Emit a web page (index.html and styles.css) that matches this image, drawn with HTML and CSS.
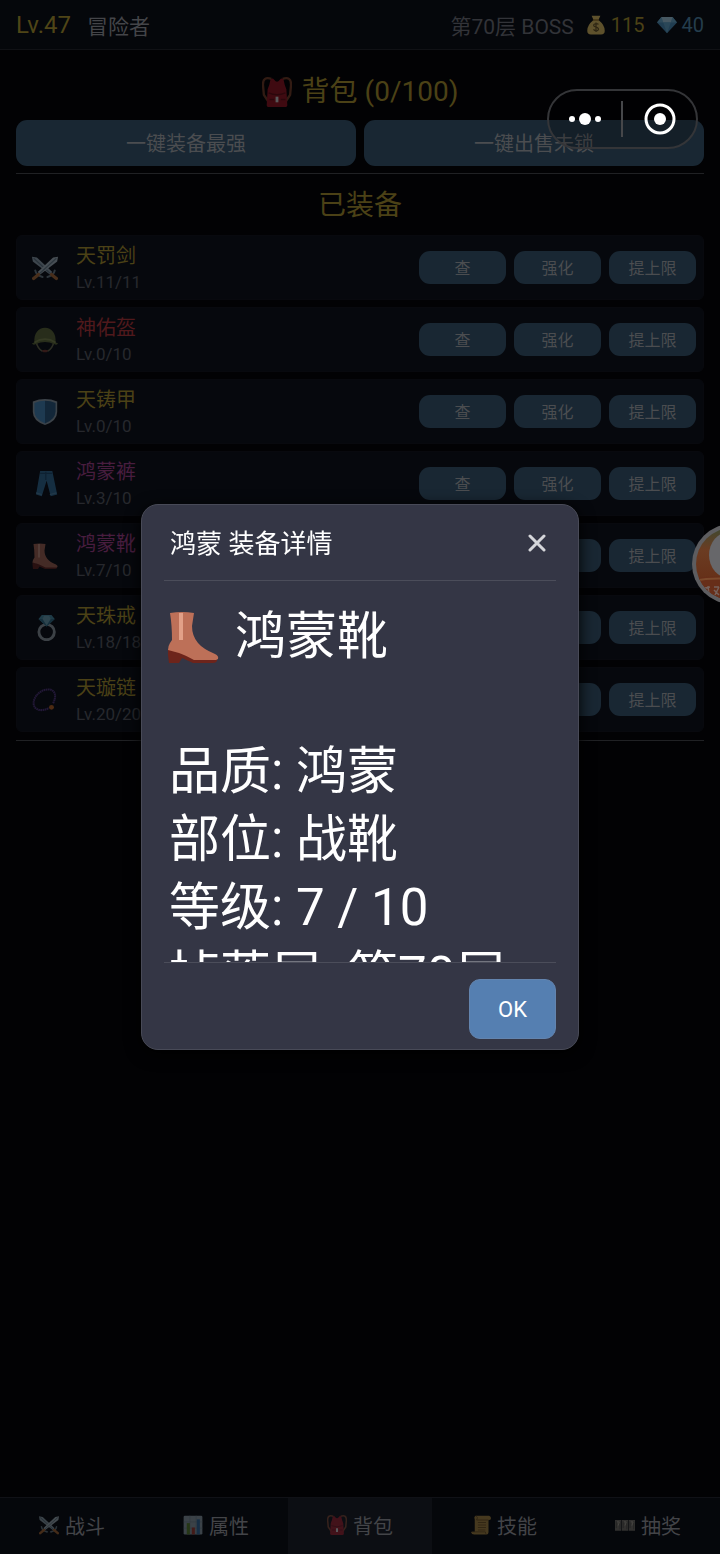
FILE: index.html
```html
<!DOCTYPE html>
<html lang="zh-CN">
<head>
<meta charset="utf-8">
<meta name="viewport" content="width=device-width, initial-scale=1">
<title>背包</title>
<link rel="stylesheet" href="styles.css">
</head>
<body>
<svg class="sprite" aria-hidden="true">
  <symbol id="swords" viewBox="0 0 32 32">
    <path d="M0 2l6 1 19 18-3 3L1 8z" fill="#a9bdc8"/><path d="M2 4l21 19" stroke="#6d8593" stroke-width="1.5"/>
    <path d="M32 2l-6 1L7 21l3 3L31 8z" fill="#c4d4dc"/><path d="M30 4L9 23" stroke="#78909c" stroke-width="1.5"/>
    <path d="M4 19q1 6 9 8M28 19q-1 6-9 8" fill="none" stroke="#788b94" stroke-width="2.5" stroke-linecap="round"/>
    <path d="M8 24l-6 5M24 24l6 5" stroke="#c87936" stroke-width="4" stroke-linecap="round"/>
  </symbol>
  <symbol id="helmet" viewBox="0 0 32 32">
    <path d="M5 18q2 9 8 12M27 18q-2 9-8 12" fill="none" stroke="#77764f" stroke-width="2"/>
    <path d="M12 29q4-2 8 0l-2 2h-4z" fill="#8a3b2c"/>
    <path d="M3 19C2 8 8 1 16 1s14 7 13 18l3 1q-1 3-5 1-11-5-22 0-4 2-5-1z" fill="#697636"/>
    <path d="M3 19q13-8 26 0" fill="none" stroke="#919c50" stroke-width="2"/>
  </symbol>
  <symbol id="shield" viewBox="0 0 32 32">
    <path d="M1 3q15-6 30 0v13q0 11-15 16Q1 27 1 16z" fill="#a4b4bd"/>
    <path d="M3 5q6-3 13-3v28Q3 25 3 15z" fill="#4d9bd3"/><path d="M16 2q7 0 13 3v10q0 10-13 15z" fill="#2c658f"/>
  </symbol>
  <symbol id="jeans" viewBox="0 0 32 32">
    <path d="M10 0h15l6 29-8 2-5-19-6 19-7-2z" fill="#3478a5"/><path d="M10 3h15M17 1v10" stroke="#1f5279" stroke-width="1.5"/>
    <path d="M5 27l7 2M22 29l8-2" stroke="#5895ba" stroke-width="1.5"/>
  </symbol>
  <symbol id="boot" viewBox="0 0 52 52">
    <path d="M1 38l14 4 34 5q2 1 1 3-1 2-4 2H26l-11-5-3 5H2l-1-8z" fill="#6d241b"/>
    <path d="M3 2q12-2 24 0l-2 13q0 10 6 17 5 6 17 11 4 2 3 5l-2 1H27Q18 44 12 42L1 39q0-4 2-7l2-3Q5 14 3 2z" fill="#bd7058"/>
    <path d="M12 2h4v27h-4z" fill="#e2a088"/>
  </symbol>
  <symbol id="ring" viewBox="0 0 32 32">
    <circle cx="18" cy="21" r="9.500" fill="none" stroke="#a5b0b5" stroke-width="3.500"/>
    <path d="M12 0h12l4 5-10 9L8 5z" fill="#4e9eb6"/><path d="M8 5h20L18 14z" fill="#347b96"/><path d="M15 1l-2 4 5 8 5-8-2-4" fill="#7dbbcd"/>
  </symbol>
  <symbol id="beads" viewBox="0 0 32 32">
    <path d="M26 20C31 10 28 3 20 3 10 3 2 12 2 20s9 11 19 6" fill="none" stroke="#5a3789" stroke-width="2.500" stroke-dasharray="2 .6"/>
    <circle cx="24" cy="25" r="3" fill="#d8701c"/>
  </symbol>
  <symbol id="pack" viewBox="0 0 32 32">
    <path d="M10 2Q1-1 1 8l1 11 6 9M22 2q9-3 9 6l-1 11-6 9" fill="none" stroke="#8e4c30" stroke-width="2.500"/>
    <path d="M9 3q2-3 4 0 3 4 6 0 2-3 4 0 1 6 3 10l1 17q0 2-3 2H8q-3 0-3-2l1-17q2-4 3-10z" fill="#b51c2b"/>
    <path d="M7 17q9 4 18 0M8 24h5M20 24h5" fill="none" stroke="#7c111c" stroke-width="1.500"/>
    <path d="M14.500 21h3v6h-3z" fill="#fff"/>
  </symbol>
  <symbol id="money" viewBox="0 0 32 32">
    <path d="M9 1h14l-3 7q10 8 10 17 0 6-6 6H8q-6 0-6-6 0-9 10-17z" fill="#d8b85b"/><path d="M11 8h10" stroke="#8a651c" stroke-width="2"/>
    <path d="M20 15q-2-2-5-1-4 1-2 4l5 2q4 3 0 5-4 1-6-2M16 12v15" fill="none" stroke="#66501f" stroke-width="2"/>
  </symbol>
  <symbol id="gem" viewBox="0 0 32 32">
    <path d="M7 3h18l7 9-16 17L0 12z" fill="#4588b1"/><path d="M7 3l3 9H0zM25 3l-3 9h10z" fill="#68a6c7"/>
    <path d="M7 3h18l-3 9H10z" fill="#a2c8db"/><path d="M10 12h12l-6 17z" fill="#5f9fc2"/>
  </symbol>
  <symbol id="chart" viewBox="0 0 32 32">
    <rect x="1" y="1" width="30" height="30" rx="2" fill="#aebfc9"/><path d="M1 11h30M1 21h30M11 1v30M21 1v30" stroke="#899ca7"/>
    <path d="M6 13h5v18H6z" fill="#6b9c32"/><path d="M14 20h5v11h-5z" fill="#c64336"/><path d="M22 7h5v24h-5z" fill="#3d82c0"/>
  </symbol>
  <symbol id="scroll" viewBox="0 0 32 32">
    <path d="M8 1h21q3 1 3 4t-4 3v19q0 4-4 4H5q-4 0-5-4h6V7Q4 2 8 1z" fill="#d0a34b"/>
    <path d="M8 1q4 3 1 7h19M1 27h22q0 3 2 4" fill="none" stroke="#8a6328" stroke-width="1.500"/><path d="M11 12h13M11 16h13M11 20h13M11 24h12" stroke="#8a6328" stroke-width="1.500"/>
  </symbol>
  <symbol id="cards" viewBox="0 0 32 32">
    <path d="M0 8h10v17H0zM11 8h10v17H11zM22 8h10v17H22z" fill="#8d887d"/>
    <path d="M2 10v11M8 10v13M13 10v11M19 10v13M24 10v11M30 10v13" stroke="#5f5a51" stroke-width="1.500"/>
    <path d="M3 11h4l-2 6M14 11h4l-2 6M25 11h4l-2 6" fill="none" stroke="#d0c8b4" stroke-width="1.500"/>
  </symbol>
</svg>

<div class="app">
  <header class="topbar">
    <span class="level">Lv.47</span>
    <span class="player">冒险者</span>
    <span class="stage">第70层 BOSS</span>
    <span class="coin gold"><svg class="icon"><use href="#money"/></svg>115</span>
    <span class="coin blue"><svg class="icon"><use href="#gem"/></svg>40</span>
  </header>

  <main class="content">
    <h1 class="title"><svg class="icon"><use href="#pack"/></svg>背包 (0/100)</h1>
    <div class="bulk">
      <button class="btn bulk-btn" type="button">一键装备最强</button>
      <button class="btn bulk-btn" type="button">一键出售未锁</button>
    </div>
    <hr class="rule">
    <h2 class="subtitle">已装备</h2>
    <ul class="gear">
      <li class="row"><svg class="icon"><use href="#swords"/></svg><div class="info"><span class="name gold">天罚剑</span><span class="lv">Lv.11/11</span></div><div class="actions"><button class="btn" type="button">查</button><button class="btn" type="button">强化</button><button class="btn" type="button">提上限</button></div></li>
      <li class="row"><svg class="icon"><use href="#helmet"/></svg><div class="info"><span class="name red">神佑盔</span><span class="lv">Lv.0/10</span></div><div class="actions"><button class="btn" type="button">查</button><button class="btn" type="button">强化</button><button class="btn" type="button">提上限</button></div></li>
      <li class="row"><svg class="icon"><use href="#shield"/></svg><div class="info"><span class="name gold">天铸甲</span><span class="lv">Lv.0/10</span></div><div class="actions"><button class="btn" type="button">查</button><button class="btn" type="button">强化</button><button class="btn" type="button">提上限</button></div></li>
      <li class="row"><svg class="icon"><use href="#jeans"/></svg><div class="info"><span class="name purple">鸿蒙裤</span><span class="lv">Lv.3/10</span></div><div class="actions"><button class="btn" type="button">查</button><button class="btn" type="button">强化</button><button class="btn" type="button">提上限</button></div></li>
      <li class="row"><svg class="icon"><use href="#boot"/></svg><div class="info"><span class="name purple">鸿蒙靴</span><span class="lv">Lv.7/10</span></div><div class="actions"><button class="btn" type="button">查</button><button class="btn" type="button">强化</button><button class="btn" type="button">提上限</button></div></li>
      <li class="row"><svg class="icon"><use href="#ring"/></svg><div class="info"><span class="name gold">天珠戒</span><span class="lv">Lv.18/18</span></div><div class="actions"><button class="btn" type="button">查</button><button class="btn" type="button">强化</button><button class="btn" type="button">提上限</button></div></li>
      <li class="row"><svg class="icon"><use href="#beads"/></svg><div class="info"><span class="name gold">天璇链</span><span class="lv">Lv.20/20</span></div><div class="actions"><button class="btn" type="button">查</button><button class="btn" type="button">强化</button><button class="btn" type="button">提上限</button></div></li>
    </ul>
    <hr class="rule">
  </main>

  <nav class="tabs">
    <button class="tab" type="button"><svg class="icon"><use href="#swords"/></svg>战斗</button>
    <button class="tab" type="button"><svg class="icon"><use href="#chart"/></svg>属性</button>
    <button class="tab active" type="button" aria-current="page"><svg class="icon"><use href="#pack"/></svg>背包</button>
    <button class="tab" type="button"><svg class="icon"><use href="#scroll"/></svg>技能</button>
    <button class="tab" type="button"><svg class="icon"><use href="#cards"/></svg>抽奖</button>
  </nav>
</div>

<button class="bubble" type="button" aria-label="悬浮球">
  <svg viewBox="0 0 80 80" aria-hidden="true">
    <defs>
      <linearGradient id="orb" x1="0" y1="0" x2="0" y2="1"><stop offset="0" stop-color="#3f4930"/><stop offset=".3" stop-color="#6b3c22"/><stop offset="1" stop-color="#632812"/></linearGradient>
      <clipPath id="orb-clip"><circle cx="40" cy="40" r="36"/></clipPath>
    </defs>
    <circle cx="40" cy="40" r="40" fill="#5d5d60"/><circle cx="40" cy="40" r="36" fill="url(#orb)"/>
    <g clip-path="url(#orb-clip)"><path d="M0 56q20-8 80 2v22H0z" fill="#672e19"/><path d="M3 57q20-6 77 2" fill="none" stroke="#7b4a2c" stroke-width="2"/>
    <ellipse cx="37" cy="31" rx="20" ry="23" fill="#67676a"/>
    <path d="M13 64l5-1M14 68l4 3M16 62l1 8M22 63h5M22 66l5 5M27 63l-4 8" stroke="#75605a" stroke-width="1.500"/></g>
  </svg>
</button>

<div class="overlay">
  <section class="modal" role="dialog" aria-modal="true" aria-labelledby="dialog-title">
    <header class="modal-head">
      <h2 class="modal-title" id="dialog-title">鸿蒙 装备详情</h2>
      <button class="close" type="button" aria-label="关闭"><svg viewBox="0 0 18 18"><path d="M2 2l14 14M16 2L2 16"/></svg></button>
    </header>
    <div class="modal-body">
      <p class="item"><svg class="item-icon"><use href="#boot"/></svg>鸿蒙靴</p>
      <p>品质: 鸿蒙</p>
      <p>部位: 战靴</p>
      <p>等级: 7 / 10</p>
      <p>掉落层: 第70层</p>
    </div>
    <footer class="modal-foot"><button class="ok" type="button">OK</button></footer>
  </section>
</div>

<div class="capsule">
  <button class="cap-btn" type="button" aria-label="更多"><svg width="32" height="12" viewBox="0 0 32 12"><circle cx="3" cy="6" r="3"/><circle cx="16" cy="6" r="6"/><circle cx="29" cy="6" r="3"/></svg></button>
  <button class="cap-btn" type="button" aria-label="关闭小程序"><svg width="32" height="32" viewBox="0 0 32 32"><circle class="target" cx="16" cy="16" r="14"/><circle cx="16" cy="16" r="6"/></svg></button>
</div>
</body>
</html>
```
FILE: styles.css
```css
* { box-sizing: border-box; }

body {
  margin: 0;
  background: #020204;
  color: #48494c;
  font-family: Roboto, "Noto Sans CJK SC", sans-serif;
  font-size: 20px;
}

h1, h2, p, ul { margin: 0; padding: 0; font-weight: 400; }
button { border: 0; padding: 0; color: inherit; font: inherit; background: none; cursor: pointer; }

.sprite { position: absolute; width: 0; height: 0; }
.icon { width: 20px; height: 20px; flex: none; opacity: .34; }
.gold { color: #4b4116; }
.blue { color: #243d4d; }
.red { color: #50191c; }
.purple { color: #481d3f; }

.app { display: flex; flex-direction: column; min-height: 100vh; }

.topbar {
  display: flex;
  align-items: center;
  height: 50px;
  padding: 0 16px;
  border-bottom: 1px solid #101115;
  background: #05070b;
  font-size: 21px;
}
.level { color: #4f4517; font-size: 24px; }
.player { margin-left: 16px; color: #444549; }
.stage { margin-left: auto; color: #323338; }
.coin { display: flex; align-items: center; gap: 5px; margin-left: 12px; font-size: 20px; }
.coin .icon { opacity: .42; }

.content { flex: 1; padding: 22px 16px; }
.title, .subtitle { line-height: 40px; font-size: 28px; text-align: center; color: #4b4116; }
.title { display: flex; align-items: center; justify-content: center; gap: 10px; margin-bottom: 8px; }
.title .icon { width: 30px; height: 30px; }
.subtitle { margin: 12px 0 9px; }
.bulk { display: flex; gap: 8px; margin-bottom: 7px; }
.btn {
  height: 33px;
  padding-bottom: 2px;
  border-radius: 11px;
  background: #192733;
  color: #4b4d50;
  font-size: 16px;
}
.bulk-btn { flex: 1; height: 46px; font-size: 20px; }
.rule { height: 1px; margin: 0; border: 0; background: #202124; }

.gear { display: grid; gap: 7px; margin-bottom: 8px; list-style: none; }
.row {
  display: flex;
  align-items: center;
  height: 65px;
  padding: 0 7px 0 15px;
  border: 1px solid #08090e;
  border-radius: 6px;
  background: #06080d;
}
.row .icon { width: 26px; height: 26px; }
.info { display: grid; padding-top: 2px; margin-left: 18px; line-height: 26px; }
.lv { font-size: 17px; color: #27282d; }
.actions { display: grid; grid-template-columns: repeat(3, 87px); gap: 8px; margin-left: auto; }

.tabs { display: grid; grid-template-columns: repeat(5, 1fr); height: 57px; border-top: 1px solid #101116; background: #05070b; }
.tab { display: flex; align-items: center; justify-content: center; gap: 6px; padding-bottom: 2px; color: #434448; }
.tab .icon { opacity: .32; }
.active { background: #0c0e13; }

.bubble { position: fixed; top: 524px; right: 0; width: 28px; height: 80px; overflow: hidden; }
.bubble svg { display: block; width: 80px; height: 80px; }

.overlay { position: fixed; inset: 0; display: flex; align-items: center; justify-content: center; padding: 24px; }
.modal {
  width: 100%;
  max-width: 438px;
  padding: 0 22px 10px;
  border: 1px solid #484a57;
  border-radius: 17px;
  background: #343645;
  color: #fff;
  box-shadow: 0 4px 16px #000;
}
.modal-head {
  display: flex;
  align-items: center;
  justify-content: space-between;
  height: 76px;
  padding: 0 10px 0 6px;
  border-bottom: 1px solid #4b4d5a;
}
.modal-title { padding-bottom: 3px; font-size: 26px; }
.close { display: grid; place-items: center; }
.close svg { width: 18px; height: 18px; fill: none; stroke: #d5d6da; stroke-width: 3; stroke-linecap: round; }
.modal-body { max-height: 381px; padding: 22px 3px 0; overflow: hidden; font-size: 51px; line-height: 68px; }
.modal-body p { padding-left: 2px; }
.modal-body .item { display: flex; align-items: center; gap: 16px; margin-bottom: 67px; padding: 0; }
.item-icon { width: 52px; height: 52px; }
.modal-foot { display: flex; justify-content: flex-end; padding-top: 16px; border-top: 1px solid #4b4d5a; }
.ok { width: 87px; height: 60px; border: 1px solid #6384ae; border-radius: 11px; background: #557fb1; font-size: 22px; }

.capsule {
  position: fixed;
  top: 89px;
  right: 22px;
  display: grid;
  grid-template-columns: 72px 1fr;
  width: 151px;
  height: 60px;
  border: 2px solid #343538;
  border-radius: 30px;
  background: rgba(0, 0, 0, .2);
}
.cap-btn { display: grid; place-items: center; fill: #fff; }
.cap-btn + .cap-btn { padding-left: 2px; background: linear-gradient(#46474a, #46474a) left center / 2px 36px no-repeat; }
.target { fill: none; stroke: #fff; stroke-width: 3; }
```
